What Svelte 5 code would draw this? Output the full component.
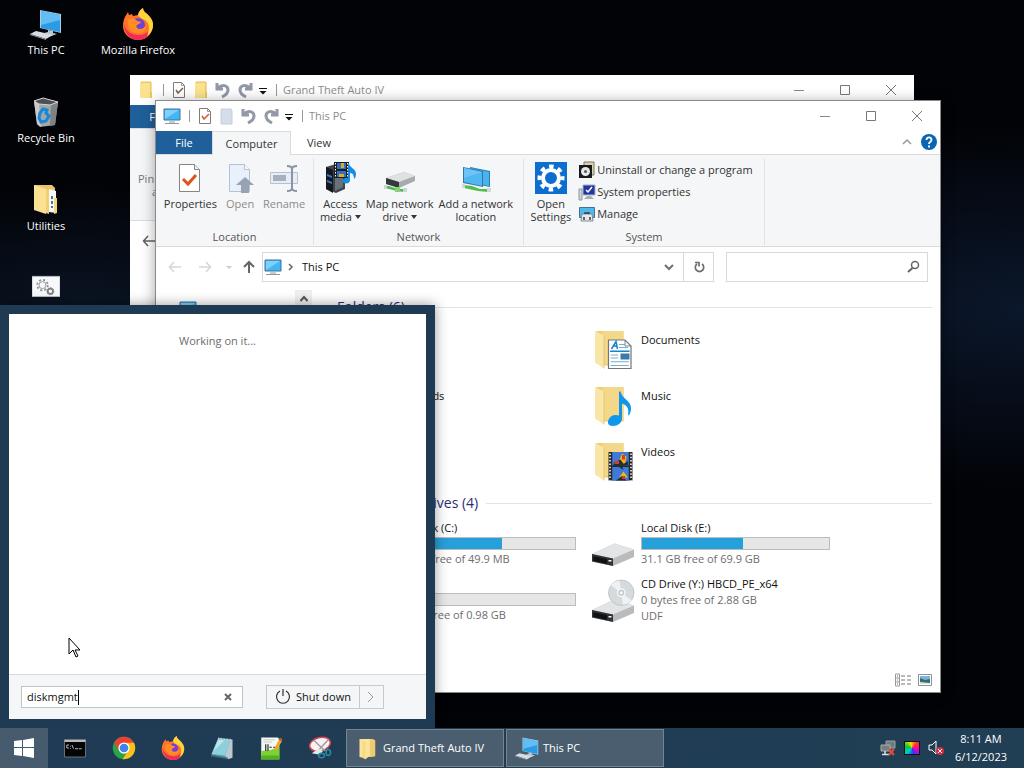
<script lang="ts">
  type Entry = { name: string; icon: string };
  type Drive = { name: string; icon: string; used?: number; info: string; fs?: string };

  const shortcuts: Entry[] = [
    { name: 'This PC', icon: 'pc' },
    { name: 'Recycle Bin', icon: 'bin' },
    { name: 'Utilities', icon: 'utilities' },
    { name: 'Setup', icon: 'batch' },
    { name: 'Mozilla Firefox', icon: 'firefox' },
  ];

  const folders: Entry[] = [
    { name: 'Desktop', icon: 'folder' },
    { name: 'Documents', icon: 'documents' },
    { name: 'Downloads', icon: 'folder' },
    { name: 'Music', icon: 'music' },
    { name: 'Pictures', icon: 'folder' },
    { name: 'Videos', icon: 'videos' },
  ];

  const drives: Drive[] = [
    { name: 'Local Disk (C:)', icon: 'drive', used: 61, info: '19.4 MB free of 49.9 MB' },
    { name: 'Local Disk (E:)', icon: 'drive', used: 54, info: '31.1 GB free of 69.9 GB' },
    { name: 'Boot (X:)', icon: 'drive', used: 3, info: '0.95 GB free of 0.98 GB' },
    { name: 'CD Drive (Y:) HBCD_PE_x64', icon: 'cd', info: '0 bytes free of 2.88 GB', fs: 'UDF' },
  ];

  const pinned: Entry[] = [
    { name: 'Command Prompt', icon: 'cmd' },
    { name: 'Google Chrome', icon: 'chrome' },
    { name: 'Mozilla Firefox', icon: 'firefox' },
    { name: 'Notepad', icon: 'notepad' },
    { name: 'Notepad++', icon: 'npp' },
    { name: 'Snipping Tool', icon: 'snip' },
  ];

  const running: Entry[] = [
    { name: 'Grand Theft Auto IV', icon: 'folderTask' },
    { name: 'This PC', icon: 'pc' },
  ];

  let query = $state('diskmgmt');
  let path = $state('This PC');
  let search = $state('');
</script>

<svelte:head>
  <title>Desktop</title>
</svelte:head>

{#snippet icon(name: string, size: number)}
  <svg width={size} height={size} viewBox="0 0 32 32" aria-hidden="true">
    {#if name === 'pc'}
      <path d="M10 2l21 4v19L10 20z" fill="#a9cfe6" />
      <path d="M11 3l19 4v17l-19-4z" fill="#2b9be6" />
      <path d="M11 3l19 4v5L11 17z" fill="#62bdf3" />
      <path d="M18 22l5 1v2l4 1-6 2-7-3 4-1z" fill="#b8c9d4" />
      <path d="M6 23l17 4-7 4L0 26z" fill="#d9dde2" />
      <path d="M0 26l16 5v1L0 27z" fill="#8d97a3" />
    {:else if name === 'bin'}
      <path d="M4 5l24 1-3 23-15 2-3-3z" fill="#a3a6a8" />
      <path d="M4 5l5 3 2 23-4-3z" fill="#c8cacc" />
      <path d="M21 8l7-2-3 23-5 1z" fill="#7f8284" />
      <path d="M4 5l9-3 15 4-8 3-11-1z" fill="#4e5052" stroke="#d5d7d8" />
      <path d="M10 17l3-4 4 1-1 3 3 3-3 5-5 1-2-4z" fill="none" stroke="#1687d9" stroke-width="3" />
    {:else if name === 'utilities'}
      <path d="M4 1h18l3 3v24H10z" fill="#e9c66a" />
      <path d="M19 5l7 2v22l-7-1z" fill="#f6f7f8" />
      <path d="M22 12v12" stroke="#59708a" stroke-width="2" stroke-dasharray="3 2" />
      <path d="M4 1l12 4v25L4 26z" fill="#fbe293" />
      <path d="M16 5l3 1v24l-3-1z" fill="#f1d077" />
      <path d="M24 14h3v15l-3 1z" fill="#f3d57c" />
    {:else if name === 'batch'}
      <path d="M0 5h32v23H0z" fill="#f7f8f9" stroke="#b9bec3" />
      <circle cx="12" cy="15" r="4" fill="none" stroke="#8b9095" stroke-width="1" />
      <circle cx="12" cy="15" r="6" fill="none" stroke="#8b9095" stroke-width="2" stroke-dasharray="2.4 2.3" />
      <circle cx="21" cy="22" r="3" fill="none" stroke="#7c8186" stroke-width="2" />
      <circle cx="21" cy="22" r="4" fill="none" stroke="#7c8186" stroke-width="1" stroke-dasharray="2 1" />
    {:else if name === 'firefox'}
      <path d="M3 9l3-5 1 3 3-1 1 2 5-1c1-4 3-6 5-7 0 4 4 5 6 8 4 4 5 9 3 14-2 6-7 10-14 10C8 32 1 26 1 18c0-4 1-7 2-9z" fill="#ff7427" />
      <path d="M2 16c0 9 6 16 14 16 8 0 14-6 14-14-3 6-7 9-13 9-8 0-13-4-15-11z" fill="#f22c58" />
      <path d="M16 7c1-4 3-6 5-7 0 4 4 5 6 8 4 4 5 9 3 14-1 3-3 5-5 6 2-5 3-10 0-14-2-3-7-3-9-7z" fill="#ffd43a" />
      <circle cx="16" cy="17" r="7" fill="#7140d4" />
      <path d="M6 12c4-3 8-1 9 1 2 0 3 1 4 1-1 2-3 2-4 3-2 2 1 4 3 4 3 0 5-2 6-4 1 7-5 9-9 8-6 0-10-6-9-13z" fill="#ff8d26" />
    {:else if name === 'folder' || name === 'documents' || name === 'music' || name === 'videos'}
      <path d="M5 4h18v23H10z" fill="#edcc78" />
      <path d="M9 4h14v22H9z" fill="#f3d889" />
      <path d="M4 4l6 3v22l-6-4z" fill="#f9e5a5" />
      <path d="M10 7v22" stroke="#e2bd62" stroke-width=".5" />
      {#if name === 'documents'}
        <path d="M13 10h11l4 4v15H13z" fill="#fff" stroke="#6f767c" stroke-width=".8" />
        <path d="M24 10v4h4" fill="none" stroke="#6f767c" stroke-width=".6" />
        <path d="M15 16l3-5 1 5m-3-2h3M14 17.500h13" fill="none" stroke="#1682cf" />
        <path d="M20 13h4M20 15h6M14.500 20h5M14.500 22h5M14.500 24.500h12M14.500 27h12" stroke="#7eaccc" stroke-width=".7" />
        <path d="M21 19h6v4h-6z" fill="#3979ab" />
      {:else if name === 'music'}
        <path d="M21 7c1 5 7 6 7 11 0 3-1 5-2 5 1-5-1-7-4-8v10c0 3-3 5-6 5-3 0-4-2-3-4 1-3 4-4 7-3V7z" fill="#0f97ea" />
      {:else if name === 'videos'}
        <path d="M13 10h16v19H13z" fill="#272829" />
        <path d="M15.500 10h11v9h-11zM15.500 20h11v9h-11z" fill="#3d7ad9" />
        <path d="M14 11v18M28 11v18" stroke="#fff" stroke-dasharray="1 1.200" />
        <path d="M20 16l2-5 3 2-1 5zM20 27l3-4 3 4z" fill="#f1b51a" />
        <path d="M17 17l4-2 2 3 3-2v3h-4l1 3-3-2-4-1zM18 29l4-3 3 3z" fill="#25302b" />
        <path d="M17 16h3v2h-3zM22 12h2v3h-2zM22 26h2v2h-2z" fill="#d33b33" />
      {/if}
    {:else if name === 'drive' || name === 'cd'}
      <path d="M2 22l15-7 13 4v5l-14 6-14-3z" fill="#b9bbbd" />
      <path d="M2 22l15-7 13 4-14 6z" fill="#e3e4e5" />
      <path d="M2 22l14 3v5L2 27z" fill="#2f3132" />
      <path d="M3 23.500l9 2v3l-9-2z" fill="#101112" />
      <path d="M13 26.500h2" stroke="#f4f4f4" />
      {#if name === 'cd'}
        <circle cx="21.500" cy="10.500" r="8.500" fill="#d5dadd" stroke="#b6bdc1" stroke-width=".5" />
        <path d="M21.500 10.500l-7-5a9 9 0 0 1 6-3zM21.500 10.500l7 5a9 9 0 0 1-6 3z" fill="#eef2f3" />
        <circle cx="21.500" cy="10.500" r="2.500" fill="#c0c7ca" stroke="#f5f7f7" />
        <circle cx="21.500" cy="10.500" r="1" fill="#fff" />
      {/if}
    {:else if name === 'cmd'}
      <path d="M2 5h28v23H2z" fill="#050505" stroke="#878b8e" />
      <path d="M2 5h28v3H2z" fill="#b8bbbd" />
      <path d="M8 12H5v4h3M10 13v1M10 16v1M12 12l2 5M16 17h4M21 17h4" fill="none" stroke="#eee" />
    {:else if name === 'chrome'}
      <circle cx="16" cy="16" r="15" fill="#2ba24c" />
      <path d="M3 8.500A15 15 0 0 1 29 8.500L30 11H16L9 19z" fill="#ea4133" />
      <path d="M29.200 9A15 15 0 0 1 16 31h-2l8-12-3-10z" fill="#fbc116" />
      <circle cx="16" cy="16" r="7.500" fill="#fff" />
      <circle cx="16" cy="16" r="5.800" fill="#4083ee" />
    {:else if name === 'notepad'}
      <path d="M11 3l19 2-6 25-22-5z" fill="#5ba0b2" />
      <path d="M11 3l16 2-7 21-18-2z" fill="#8dcfdc" />
      <path d="M11 5l8 1-14 14z" fill="#c0e6ea" />
      <path d="M27 5l3 0v24l-6 2-4-5z" fill="#b9c9cf" />
      <path d="M2 25l22 4v2L1 27z" fill="#406d7f" />
      <path d="M11 3l18 2" stroke="#d8e1e4" stroke-width="2" stroke-dasharray="1 1" />
    {:else if name === 'npp'}
      <path d="M3 2h22l2 2v27H3z" fill="#f5f7f3" />
      <path d="M3 20l12-1 12-5v17H3z" fill="#7ed133" />
      <path d="M3 26h24v5H3z" fill="#4db419" />
      <path d="M6 5h15M6 8h11" stroke="#bac0b6" />
      <path d="M9 11v9M12 11v9M14 15h3M19 15h3" stroke="#222" stroke-width="1.500" />
      <path d="M27 4l4 2-7 12-3 2v-4z" fill="#f2a522" />
      <path d="M28 2l3 2-1 3-4-2z" fill="#b65b32" />
    {:else if name === 'snip'}
      <ellipse cx="16" cy="11" rx="14" ry="9" fill="#f7f3f2" stroke="#d24450" stroke-width="2" transform="rotate(-14 16 11)" />
      <path d="M8 6l15 14M27 5L12 21" stroke="#9aa2a4" stroke-width="2" />
      <path d="M5 23l9-6 6 3-4 5z" fill="#e6e8e8" />
      <ellipse cx="18" cy="26" rx="4" ry="3" fill="none" stroke="#278ba4" stroke-width="2" />
      <ellipse cx="27" cy="22" rx="3" ry="4" fill="none" stroke="#278ba4" stroke-width="2" />
    {:else if name === 'folderTask'}
      <path d="M10 4h14l3 2v21l-5 1H10z" fill="#edcb72" />
      <path d="M6 4h14v22l-6 5-3-2-5-1z" fill="#fae49b" />
      <path d="M6 4h4v25l4 2V8z" fill="#f7d985" />
    {/if}
  </svg>
{/snippet}

{#snippet glyph(name: string)}
  <svg width="18" height="18" viewBox="0 0 18 18" aria-hidden="true">
    {#if name === 'monitor'}
      <path d="M1 2h16v11H1z" fill="#45b6f5" stroke="#3b7599" />
      <path d="M2 3h14L2 12z" fill="#7fd0fb" />
      <path d="M6 15h6M2 16.500h14" stroke="#8b9aa4" />
    {:else if name === 'folder'}
      <path d="M4 1h10v14H4z" fill="#efd174" stroke="#e6c15b" />
      <path d="M3 2h10v15H3z" fill="#fae28e" />
      <path d="M14 11v6" stroke="#e9c766" stroke-width="2" />
    {:else if name === 'folderGrey'}
      <path d="M3 2h10l1 2v13H3z" fill="#d4dde8" stroke="#c3ced9" />
    {:else if name === 'check' || name === 'checkGrey'}
      <path d="M3.500 1.500h8l3 3v12h-11z" fill="#fff" stroke="#7d7d7d" />
      <path d="M11.500 1.500v3h3" fill="none" stroke="#999" />
      <path d="M6 9l2 3 5-5" fill="none" stroke={name === 'check' ? '#d9582f' : '#78604f'} stroke-width="1.500" />
    {:else if name === 'undo'}
      <path d="M3 2v6h6M4 7c4-4 10-3 10 2 0 3-2 5-6 7" fill="none" stroke="#9298a8" stroke-width="3" />
    {:else if name === 'redo'}
      <path d="M15 2v6H9M14 7c-4-4-10-3-10 2 0 3 2 5 6 7" fill="none" stroke="#9298a8" stroke-width="3" />
    {:else if name === 'more'}
      <path d="M5 7.500h8" stroke="#111" />
      <path d="M5.500 10h7L9 13.500z" fill="#111" />
    {:else if name === 'min'}
      <path d="M4 9.500h10" stroke="#888" />
    {:else if name === 'max'}
      <path d="M4.500 4.500h9v9h-9z" fill="none" stroke="#777" />
    {:else if name === 'close'}
      <path d="M4 4l10 10M14 4L4 14" stroke="#777" />
    {:else if name === 'up'}
      <path d="M9 15V4M4 9l5-5 5 5" fill="none" stroke="#666" stroke-width="2" />
    {:else if name === 'back' || name === 'backDark'}
      <path d="M15 9H4M8 4L3.500 9 8 14" fill="none" stroke={name === 'back' ? '#d6d6d6' : '#606060'} stroke-width="1.500" />
    {:else if name === 'forward'}
      <path d="M3 9h11M10 4l4.500 5-4.500 5" fill="none" stroke="#d6d6d6" stroke-width="1.500" />
    {:else if name === 'recent'}
      <path d="M6 8l3 3 3-3z" fill="#ccc" />
    {:else if name === 'down'}
      <path d="M5 7l4 4 4-4" fill="none" stroke="#707070" stroke-width="2" />
    {:else if name === 'refresh'}
      <path d="M12 6a4.200 4.200 0 1 1-5 0M5 4.500h4v4" fill="none" stroke="#6e6e6e" stroke-width="1.700" />
    {:else if name === 'search'}
      <circle cx="11" cy="7" r="3.500" fill="none" stroke="#666" stroke-width="1.500" />
      <path d="M8.500 10L4 14" stroke="#666" stroke-width="2" />
    {:else if name === 'chevron'}
      <path d="M7 6l3 3-3 3" fill="none" stroke="#666" stroke-width="1.500" />
    {:else if name === 'collapse'}
      <path d="M5 11l4-4 4 4" fill="none" stroke="#999" stroke-width="1.500" />
    {:else if name === 'help'}
      <circle cx="9" cy="9" r="8" fill="#0a64b4" />
      <path d="M6.500 7c0-3.500 5-3.500 5 0 0 2-2.500 1.500-2.500 4" fill="none" stroke="#fff" stroke-width="1.800" />
      <path d="M8 12.500h2v2H8z" fill="#fff" />
    {:else if name === 'program'}
      <path d="M6 1h10v13H6z" fill="#ded3ae" stroke="#77766c" />
      <path d="M1 4h13v13H1z" fill="#17191a" />
      <circle cx="7.500" cy="10.500" r="4.500" fill="#e6e9e8" />
      <circle cx="7.500" cy="10.500" r="1.500" fill="#50595c" />
    {:else if name === 'sysprops'}
      <path d="M1 6h3v11H1z" fill="#ced4d7" stroke="#8e989d" />
      <path d="M5 2h12v10H5z" fill="#2436a3" stroke="#aab2ba" />
      <path d="M8 7l2 2 4-5" fill="none" stroke="#fff" stroke-width="1.500" />
      <path d="M9 13h4l3 3H6z" fill="#a7b0b5" />
    {:else if name === 'manage'}
      <path d="M1.500 2.500h15v10h-15z" fill="#51b8ef" stroke="#476f8b" />
      <path d="M4 9h10l1 7H3z" fill="#e6eaec" stroke="#7e8b92" />
      <path d="M7 9V8h4v1M6 12v3M12 12v3" fill="none" stroke="#343a3e" stroke-width="1.500" />
    {/if}
  </svg>
{/snippet}

{#snippet ribbonIcon(name: string)}
  <svg width="34" height="34" viewBox="0 0 34 34" aria-hidden="true">
    {#if name === 'properties'}
      <path d="M6.500 3.500h15l5 5v22h-20z" fill="#fff" stroke="#858585" />
      <path d="M21.500 3.500v5h5" fill="#eee" stroke="#858585" />
      <path d="M10 18l5 5 8-9" fill="none" stroke="#dc5420" stroke-width="3" />
    {:else if name === 'open'}
      <path d="M6.500 3.500h15l5 5v22h-20z" fill="#e7f0fb" stroke="#b6c2d2" />
      <path d="M21.500 3.500v5h5" fill="#f8fbff" stroke="#b6c2d2" />
      <path d="M18 32V24h-5l9-8 9 8h-5v8z" fill="#98a2b2" />
    {:else if name === 'rename'}
      <path d="M3.500 11.500h27v11h-27z" fill="#e8edf5" stroke="#b7c2d0" />
      <path d="M6 14h13v6H6z" fill="#a5b0c1" />
      <path d="M20 5c3 0 5 1 5 3 0-2 2-3 5-3M25 7v21M20 30c3 0 5-1 5-3 0 2 2 3 5 3" fill="none" stroke="#8995a6" stroke-width="2" />
    {:else if name === 'media'}
      <path d="M3 6l10-3 9 4v21l-9 4-10-4z" fill="#3f454b" />
      <path d="M3 6l7 3v23l-7-4z" fill="#15191e" />
      <path d="M4 13l5 2v2l-5-2zM4 19l5 2v2l-5-2z" fill="#367bd6" />
      <path d="M12 13l8-2v15l-8 4z" fill="#68717a" />
      <path d="M11 1h15v16H11z" fill="#191d22" />
      <path d="M14 2h9v6h-9zM14 10h9v6h-9z" fill="#386fba" />
      <path d="M12.500 2v15M24.500 2v15" stroke="#fff" stroke-dasharray="1.500 1.500" />
      <path d="M18 2h3v5h-3zM16 13h5v3h-5z" fill="#d0ae3d" />
      <path d="M26 2c0 5 7 5 7 11 0 3-1 4-2 5 0-5-2-6-4-6v7c0 3-3 4-6 3-3-2 0-6 4-5V2z" fill="#158ce4" />
    {:else if name === 'map'}
      <path d="M3 17l18-6 11 4v5l-16 7-13-4z" fill="#a8abad" />
      <path d="M3 17l18-6 11 4-16 6z" fill="#dfe1e2" />
      <path d="M3 17l13 4v6L3 23z" fill="#33383a" />
      <path d="M2 25h4l9 3h6v3l-7-1-12-3z" fill="#4dbb4e" />
      <path d="M1 24h3v4H1zM20 27h4v4h-4z" fill="#ced5d8" />
      <path d="M12 26h5v5h-5z" fill="#8ad07a" />
    {:else if name === 'location'}
      <path d="M11 6l20 4v16l-20-4z" fill="#287eb5" />
      <path d="M12 7l18 4v14l-18-4z" fill="#4bb3ec" />
      <path d="M4 6l20 4v16L4 22z" fill="#3178a8" />
      <path d="M5 7l18 4v14L5 21z" fill="#51b6f1" />
      <path d="M5 7l18 4L5 17z" fill="#6cc5f6" />
      <path d="M5 24l8 1 8 3h8v3l-10-1-14-3z" fill="#53bd51" />
      <path d="M3 23h3v4H3zM28 27h4v4h-4z" fill="#d3d9da" />
    {:else if name === 'settings'}
      <path d="M1 1h32v32H1z" fill="#0c6fd0" />
      <circle cx="17" cy="17" r="8" fill="none" stroke="#fff" stroke-width="4" />
      <circle cx="17" cy="17" r="11.500" fill="none" stroke="#fff" stroke-width="4" stroke-dasharray="4.520 4.510" stroke-dashoffset="2.260" />
    {/if}
  </svg>
{/snippet}

{#snippet titlebar(title: string, first: string, check: string, second: string)}
  <header class="titlebar">
    <div class="quick">
      <span class="app-icon">{@render glyph(first)}</span>
      <span class="sep"></span>
      <button class="tool" aria-label="Properties">{@render glyph(check)}</button>
      <button class="tool" aria-label="New folder">{@render glyph(second)}</button>
      <button class="tool" aria-label="Undo">{@render glyph('undo')}</button>
      <button class="tool" aria-label="Redo">{@render glyph('redo')}</button>
      <button class="tool narrow" aria-label="Customize toolbar">{@render glyph('more')}</button>
      <span class="sep tight"></span>
    </div>
    <span class="title">{title}</span>
    <button class="caption" aria-label="Minimize">{@render glyph('min')}</button>
    <button class="caption" aria-label="Maximize">{@render glyph('max')}</button>
    <button class="caption" aria-label="Close">{@render glyph('close')}</button>
  </header>
{/snippet}

<main class="desktop">
  <nav class="shortcuts" aria-label="Desktop icons">
    {#each shortcuts as s}
      <button class="shortcut">
        {@render icon(s.icon, s.icon === 'batch' ? 28 : 32)}
        <span>{s.name}</span>
      </button>
    {/each}
  </nav>

  <section class="window rear" aria-label="Grand Theft Auto IV">
    {@render titlebar('Grand Theft Auto IV', 'folder', 'checkGrey', 'folder')}
    <div class="tabs"><button class="tab file">File</button></div>
    <div class="ribbon rear-ribbon"><span>Pin to Quick<br />access</span></div>
    <div class="address">{@render glyph('backDark')}</div>
  </section>

  <section class="window front" aria-label="This PC">
    {@render titlebar('This PC', 'monitor', 'check', 'folderGrey')}
    <div class="tabs">
      <button class="tab file">File</button>
      <button class="tab active">Computer</button>
      <button class="tab">View</button>
      <span class="spacer"></span>
      <button class="tool" aria-label="Collapse ribbon">{@render glyph('collapse')}</button>
      <button class="tool help" aria-label="Help">{@render glyph('help')}</button>
    </div>

    <div class="ribbon">
      <div class="group location">
        <div class="commands">
          <button class="command">{@render ribbonIcon('properties')}<span>Properties</span></button>
          <button class="command dim">{@render ribbonIcon('open')}<span>Open</span></button>
          <button class="command dim">{@render ribbonIcon('rename')}<span>Rename</span></button>
        </div>
        <span class="caption-text">Location</span>
      </div>
      <div class="group network">
        <div class="commands">
          <button class="command">{@render ribbonIcon('media')}<span>Access<br />media <i class="caret"></i></span></button>
          <button class="command">{@render ribbonIcon('map')}<span>Map network<br />drive <i class="caret"></i></span></button>
          <button class="command">{@render ribbonIcon('location')}<span>Add a network<br />location</span></button>
        </div>
        <span class="caption-text">Network</span>
      </div>
      <div class="group system">
        <div class="commands">
          <button class="command">{@render ribbonIcon('settings')}<span>Open<br />Settings</span></button>
          <div class="links">
            <button class="link">{@render glyph('program')}Uninstall or change a program</button>
            <button class="link">{@render glyph('sysprops')}System properties</button>
            <button class="link">{@render glyph('manage')}Manage</button>
          </div>
        </div>
        <span class="caption-text">System</span>
      </div>
    </div>

    <div class="address">
      <button class="nav" aria-label="Back">{@render glyph('back')}</button>
      <button class="nav" aria-label="Forward">{@render glyph('forward')}</button>
      <button class="nav recent" aria-label="Recent">{@render glyph('recent')}</button>
      <button class="nav up" aria-label="Up">{@render glyph('up')}</button>
      <div class="path">
        {@render glyph('monitor')}
        {@render glyph('chevron')}
        <input aria-label="Address" bind:value={path} />
        <button class="tool" aria-label="Previous locations">{@render glyph('down')}</button>
        <button class="refresh" aria-label="Refresh">{@render glyph('refresh')}</button>
      </div>
      <div class="search">
        <input aria-label="Search This PC" bind:value={search} />
        {@render glyph('search')}
      </div>
    </div>

    <div class="body">
      <aside class="tree">
        <a href="#desktop">{@render glyph('monitor')}Desktop</a>
        <button class="scroll-up" aria-label="Scroll up">
          <svg width="10" height="8" viewBox="0 0 10 8"><path d="M1.500 6L5 2l3.500 4" fill="none" stroke="#555" stroke-width="2" /></svg>
        </button>
      </aside>
      <div class="files">
        <h2>Folders (6)</h2>
        <div class="grid">
          {#each folders as f}
            <div class="item">
              {@render icon(f.icon, 48)}
              <span class="name">{f.name}</span>
            </div>
          {/each}
        </div>
        <h2>Devices and drives (4)</h2>
        <div class="grid">
          {#each drives as d}
            <div class="item">
              {@render icon(d.icon, 48)}
              <div class="details">
                <span>{d.name}</span>
                {#if d.used !== undefined}
                  <div class="meter"><div class="fill" style="width: {d.used}%"></div></div>
                {/if}
                <span class="info">{d.info}</span>
                {#if d.fs}<span class="info">{d.fs}</span>{/if}
              </div>
            </div>
          {/each}
        </div>
      </div>
    </div>

    <footer class="status">
      <button aria-label="Details view">
        <svg width="16" height="14" viewBox="0 0 16 14">
          <path d="M.5 1h4v12h-4zM.5 5h4M.5 9h4" fill="#fff" stroke="#999" />
          <path d="M2 3h1M2 7h1M2 11h1M6 3h4M12 3h4M6 7h4M12 7h4M6 11h4M12 11h4" stroke="#777" />
        </svg>
      </button>
      <button aria-label="Large icons view">
        <svg width="14" height="12" viewBox="0 0 14 12">
          <path d="M.5.5h13v11H.5z" fill="#fff" stroke="#8a9398" />
          <path d="M2 2h10v8H2z" fill="#78b4e4" />
          <path d="M2 4l5 2 5-1v5H2z" fill="#3c6c62" />
          <path d="M2 8l10 1v1H2z" fill="#d0e3e5" />
        </svg>
      </button>
    </footer>
  </section>

  <section class="start-menu" aria-label="Start menu">
    <p class="results">Working on it...</p>
    <div class="start-footer">
      <div class="start-search">
        <input aria-label="Search programs and files" bind:value={query} />
        <i class="text-caret"></i>
        <button aria-label="Clear search" onclick={() => (query = '')}>
          <svg width="8" height="8" viewBox="0 0 8 8"><path d="M1 1l6 6M7 1L1 7" stroke="#666" stroke-width="2" /></svg>
        </button>
      </div>
      <div class="power">
        <button class="shutdown">
          <svg width="16" height="16" viewBox="0 0 16 16">
            <path d="M5 2a6.500 6.500 0 1 0 6 0M8 0v7" fill="none" stroke="#333" stroke-width="1.200" />
          </svg>
          Shut down
        </button>
        <button class="power-more" aria-label="More power options">
          <svg width="8" height="12" viewBox="0 0 8 12"><path d="M1 1l5 5-5 5" fill="none" stroke="#999" /></svg>
        </button>
      </div>
    </div>
  </section>

  <svg class="pointer" width="13" height="21" viewBox="0 0 13 21" aria-hidden="true">
    <path d="M1 1v16l4-4 3 7 2-1-3-6h5z" fill="#fff" stroke="#000" />
  </svg>

  <footer class="taskbar">
    <button class="start" aria-label="Start">
      <svg width="20" height="20" viewBox="0 0 20 20">
        <path d="M0 3l8-1v7H0zM9 2l11-2v9H9zM0 10h8v8l-8-1zM9 10h11v10L9 18z" fill="#fff" />
      </svg>
    </button>
    <div class="pinned">
      {#each pinned as p}
        <button aria-label={p.name}>{@render icon(p.icon, 24)}</button>
      {/each}
    </div>
    {#each running as r}
      <button class="task">{@render icon(r.icon, 24)}<span>{r.name}</span></button>
    {/each}
    <div class="tray">
      <svg width="16" height="16" viewBox="0 0 16 16" aria-hidden="true">
        <path d="M6 1h9v7H6z" fill="#737a7e" stroke="#9aa1a4" />
        <path d="M1 5h9v6H1z" fill="#777f82" stroke="#a9aeb1" />
        <path d="M5 11v3M2 14.500h7" stroke="#ddd" stroke-width="1.500" />
        <path d="M9 9l5 6M14 9l-5 6" stroke="#e34c32" stroke-width="2" />
      </svg>
      <div class="palette"></div>
      <svg width="16" height="16" viewBox="0 0 16 16" aria-hidden="true">
        <path d="M1 5h3l4-4v13l-4-4H1z" fill="none" stroke="#fff" />
        <circle cx="12" cy="11" r="4" fill="#d52c42" />
        <path d="M10 9l4 4M14 9l-4 4" stroke="#fff" />
      </svg>
      <time class="clock">8:11 AM<br />6/12/2023</time>
    </div>
  </footer>
</main>

<style>
  :global(body) {
    margin: 0;
    overflow: hidden;
  }

  .desktop {
    position: relative;
    display: flex;
    flex-direction: column;
    min-height: 100vh;
    overflow: hidden;
    font: 11px/16px "Open Sans", "Noto Sans", sans-serif;
    color: #1a1a1a;
    background:
      radial-gradient(ellipse at 8% 42%, #0b1626 0%, transparent 22%),
      radial-gradient(ellipse at 100% 40%, #0b172b 0%, transparent 28%),
      #020307;
  }

  button {
    padding: 0;
    border: 0;
    background: none;
    font: inherit;
    color: inherit;
  }

  input {
    min-width: 0;
    padding: 0;
    border: 0;
    outline: 0;
    background: none;
    font: inherit;
    color: #111;
  }

  svg {
    display: block;
    flex: none;
  }

  .shortcuts {
    display: grid;
    grid-template-rows: repeat(4, 88px);
    grid-auto-flow: column;
    grid-auto-columns: 92px;
    justify-content: start;
    flex: 1;
    padding-top: 8px;
  }

  .shortcut {
    display: flex;
    flex-direction: column;
    align-items: center;
    gap: 2px;
    color: #fff;
    white-space: nowrap;
  }

  .window {
    position: absolute;
    display: flex;
    flex-direction: column;
    box-sizing: border-box;
    width: 784px;
    height: 591px;
    background: #fff;
  }

  .rear {
    left: 130px;
    top: 75px;
  }

  .front {
    left: 156px;
    top: 101px;
    box-shadow: 0 0 0 1px #8a8a8a, 0 2px 14px rgba(0, 0, 0, 0.4);
  }

  .titlebar {
    display: flex;
    align-items: center;
    height: 30px;
    color: #8c8c8c;
  }

  .quick {
    display: flex;
    align-items: center;
    gap: 4px;
    padding-left: 7px;
  }

  .app-icon {
    width: 18px;
  }

  .sep {
    width: 1px;
    height: 12px;
    margin: 0 2px 0 4px;
    background: #999;
  }

  .sep.tight {
    margin: 0 2px 0 0;
  }

  .tool {
    width: 18px;
    height: 18px;
  }

  .tool.narrow {
    margin-left: -4px;
  }

  .title {
    flex: 1;
    padding-left: 4px;
  }

  .caption {
    display: grid;
    place-items: center;
    width: 46px;
    height: 30px;
  }

  .tabs {
    display: flex;
    height: 23px;
    border-bottom: 1px solid #dadbdc;
    padding-right: 2px;
    color: #333;
  }

  .tabs .tool {
    margin-top: 2px;
  }

  .tab {
    width: 56px;
  }

  .file {
    height: 23px;
    background: #1f609b;
    color: #fff;
  }

  .active {
    width: 79px;
    height: 24px;
    box-sizing: border-box;
    border: 1px solid #dadbdc;
    border-bottom: 0;
    background: #f5f6f7;
  }

  .spacer {
    flex: 1;
  }

  .tool.help {
    margin-left: 4px;
  }

  .ribbon {
    display: flex;
    height: 91px;
    border-bottom: 1px solid #dadbdc;
    background: #f5f6f7;
    color: #333;
  }

  .rear-ribbon span {
    padding: 43px 8px 0;
    color: #777;
    line-height: 13px;
    text-align: center;
  }

  .rear .address {
    padding-left: 10px;
  }

  .group {
    display: flex;
    flex-direction: column;
    align-items: center;
    justify-content: space-between;
    box-sizing: border-box;
    margin: 3px 0 1px;
    border-right: 1px solid #e2e3e4;
  }

  .location {
    width: 158px;
  }

  .network {
    width: 210px;
  }

  .system {
    width: 241px;
  }

  .commands {
    display: flex;
    gap: 6px;
    padding-top: 3px;
  }

  .command {
    display: flex;
    flex-direction: column;
    align-items: center;
    gap: 2px;
    height: 66px;
    line-height: 13px;
    white-space: nowrap;
  }

  .network .commands {
    gap: 5px;
    padding-right: 4px;
  }

  .system .commands {
    gap: 7px;
    padding-right: 5px;
  }

  .dim {
    color: #8b8b8b;
  }

  .caret {
    display: inline-block;
    border: 3px solid transparent;
    border-top: 4px solid #333;
    border-bottom: 0;
    vertical-align: 2px;
  }

  .caption-text {
    color: #555;
    line-height: 16px;
  }

  .links {
    display: flex;
    flex-direction: column;
    margin-top: -2px;
  }

  .link {
    display: flex;
    align-items: center;
    gap: 1px;
    height: 22px;
    white-space: nowrap;
  }

  .address {
    display: flex;
    align-items: center;
    height: 40px;
    padding: 0 12px 0 4px;
  }

  .nav {
    display: grid;
    place-items: center;
    width: 30px;
    height: 24px;
  }

  .nav.recent {
    width: 16px;
  }

  .nav.up {
    width: 26px;
  }

  .path {
    display: flex;
    align-items: center;
    box-sizing: border-box;
    flex: 1;
    height: 30px;
    margin-right: 12px;
    border: 1px solid #d9d9d9;
    padding-left: 1px;
  }

  .path input {
    flex: 1;
    padding-left: 2px;
  }

  .path .tool {
    margin-right: 5px;
  }

  .refresh {
    display: grid;
    place-items: center;
    width: 30px;
    height: 28px;
    border-left: 1px solid #d9d9d9;
  }

  .search {
    display: flex;
    align-items: center;
    box-sizing: border-box;
    width: 202px;
    height: 30px;
    border: 1px solid #d9d9d9;
    padding-right: 5px;
  }

  .search input {
    flex: 1;
  }

  .body {
    display: flex;
    flex: 1;
    min-height: 0;
  }

  .tree {
    display: flex;
    justify-content: space-between;
    align-items: start;
    width: 156px;
  }

  .tree a {
    display: flex;
    align-items: center;
    gap: 4px;
    padding: 13px 0 0 23px;
    color: #111;
    text-decoration: none;
  }

  .scroll-up {
    display: grid;
    place-items: center;
    width: 17px;
    height: 17px;
    margin-top: 3px;
    background: #f0f0f0;
  }

  .files {
    flex: 1;
    padding: 10px 8px 0 25px;
  }

  h2 {
    display: flex;
    align-items: center;
    gap: 8px;
    margin: 0;
    color: #2b2f75;
    font-size: 14px;
    font-weight: 400;
    line-height: 20px;
  }

  h2::after {
    content: "";
    flex: 1;
    height: 1px;
    background: #e3e3e3;
  }

  .grid {
    display: grid;
    grid-template-columns: repeat(auto-fill, 254px);
    grid-auto-rows: 56px;
    padding: 4px 0;
  }

  .item {
    display: flex;
    align-items: center;
    gap: 4px;
    margin-left: -2px;
    color: #111;
  }

  .name {
    align-self: start;
    padding-top: 11px;
  }

  .details {
    display: flex;
    flex-direction: column;
    align-self: start;
    width: 189px;
    padding-top: 3px;
  }

  .info {
    color: #6d6d6d;
  }

  .meter {
    height: 11px;
    border: 1px solid #bcbcbc;
    margin: 1px 0;
    background: #e6e6e6;
  }

  .fill {
    height: 11px;
    background: #26a0da;
  }

  .status {
    display: flex;
    justify-content: end;
    align-items: center;
    gap: 7px;
    height: 25px;
    padding-right: 8px;
  }

  .start-menu {
    position: absolute;
    left: 0;
    bottom: 40px;
    display: flex;
    flex-direction: column;
    box-sizing: border-box;
    width: 435px;
    height: 423px;
    border: 9px solid #1f3b54;
    background: #fff;
    box-shadow: 0 0 12px rgba(0, 0, 0, 0.4);
  }

  .results {
    flex: 1;
    margin: 0;
    padding-top: 19px;
    color: #6d6d6d;
    text-align: center;
  }

  .start-footer {
    display: flex;
    align-items: center;
    gap: 23px;
    height: 44px;
    padding-left: 12px;
    border-top: 1px solid #d6dadd;
    background: #f5f6f7;
  }

  .start-search {
    display: flex;
    align-items: center;
    box-sizing: border-box;
    width: 222px;
    height: 22px;
    padding: 0 10px 0 5px;
    border: 1px solid #c3c3c3;
    background: #fff;
  }

  .start-search input {
    field-sizing: content;
  }

  .text-caret {
    width: 1px;
    height: 15px;
    background: #000;
  }

  .start-search button {
    margin-left: auto;
  }

  .power {
    display: flex;
    height: 22px;
    border: 1px solid #c9c9c9;
  }

  .shutdown {
    display: flex;
    align-items: center;
    gap: 5px;
    padding: 0 8px;
    color: #111;
  }

  .power-more {
    display: grid;
    place-items: center;
    width: 24px;
    border-left: 1px solid #c9c9c9;
  }

  .pointer {
    position: absolute;
    left: 68px;
    top: 637px;
  }

  .taskbar {
    position: relative;
    display: flex;
    align-items: center;
    gap: 2px;
    height: 40px;
    background: linear-gradient(90deg, #1f3b55, #203e54);
    color: #fff;
  }

  .start {
    display: grid;
    place-items: center;
    width: 48px;
    height: 40px;
    background: #465b6d;
  }

  .pinned {
    display: flex;
  }

  .pinned button {
    display: grid;
    place-items: center;
    width: 49px;
    height: 40px;
  }

  .task {
    display: flex;
    align-items: center;
    gap: 4px;
    box-sizing: border-box;
    width: 158px;
    height: 38px;
    padding-left: 8px;
    border: 1px solid #75858f;
    background: #4a5e6f;
  }

  .tray {
    display: flex;
    align-items: center;
    gap: 8px;
    margin-left: auto;
    padding-right: 17px;
  }

  .palette {
    width: 14px;
    height: 12px;
    border: 1px solid #111;
    background: conic-gradient(from 45deg, #f33, #e0b, #33f, #0cc, #0c3, #fd0, #f33);
  }

  .clock {
    line-height: 18px;
    padding-left: 3px;
    text-align: center;
  }
</style>
